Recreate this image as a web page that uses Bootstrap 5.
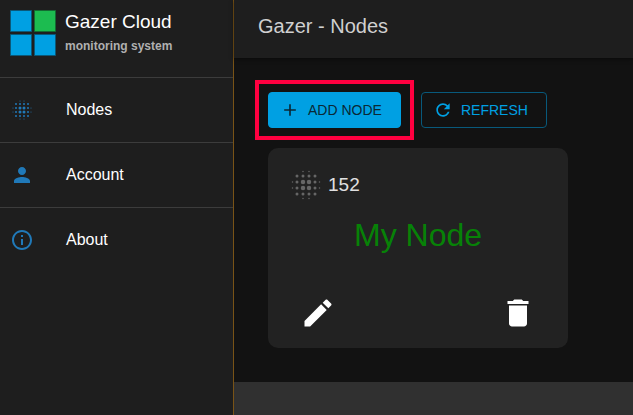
<!DOCTYPE html>
<html lang="en" data-bs-theme="dark">
<head>
<meta charset="utf-8">
<meta name="viewport" content="width=device-width, initial-scale=1">
<title>Gazer - Nodes</title>
<link href="https://cdn.jsdelivr.net/npm/bootstrap@5.3.0/dist/css/bootstrap.min.css" rel="stylesheet">
<style>
body { background: #303030; color: #fff; font-family: "Liberation Sans", Arial, sans-serif; }
svg { display: block; flex: none; }
.sidebar { width: 234px; flex: none; background: #1e1e1e; border-right: 1px solid #795316; }
.brand { height: 77px; padding: 10px; gap: 9px; color: #f0f0f0; }
.brand:hover { color: #fff; }
.brand-name { font-size: 19px; line-height: 24px; }
.brand-sub { font-size: 12px; line-height: 24px; color: #b0b0b0; }
.side-link { height: 65px; padding: 0 10px; gap: 32px; border-top: 1px solid #3c3c3c; border-radius: 0; color: #fff; font-size: 16px; }
.side-link:hover { color: #fff; background: #262626; }
.side-link svg { color: #2079b8; }
.topbar { height: 58px; padding: 0 24px; background: #1e1e1e; box-shadow: 0 1px 4px rgba(0, 0, 0, .5); }
.topbar h1 { font-size: 20px; line-height: 24px; margin: 0 0 6px; font-weight: 400; color: #d0d0d0; }
.page { background: #121212; padding: 34px; }
.tool { --bs-btn-padding-x: 11px; --bs-btn-padding-y: 0; --bs-btn-font-size: 14px; --bs-btn-border-radius: 4px; height: 36px; }
.tool-add { --bs-btn-bg: #00a0e3; --bs-btn-color: #0a2836; --bs-btn-hover-bg: #0090cc; --bs-btn-hover-color: #0a2836; --bs-btn-border-color: #00a0e3; min-width: 133px; }
.tool-refresh { --bs-btn-color: #00a0e3; --bs-btn-border-color: #08597b; --bs-btn-hover-color: #00a0e3; --bs-btn-hover-border-color: #00a0e3; min-width: 126px; }
.toolbar { gap: 20px; margin-bottom: 20px; }
.highlight::after { content: ""; position: absolute; inset: -12px -13px; border: 4px solid #ff0040; pointer-events: none; }
.node-card { max-width: 300px; min-height: 200px; background: #222; border: 0; border-radius: 10px; padding: 19px 20px 5px; color: #e0e0e0; }
.node-id { font-size: 19px; line-height: 24px; }
.node-id svg { color: #666; }
.node-name { font-size: 32px; line-height: 40px; color: #078207; margin: 12px 0 0; font-weight: 400; }
.icon-btn { --bs-btn-padding-x: 12px; --bs-btn-padding-y: 12px; --bs-btn-border-width: 0; --bs-btn-color: #fff; --bs-btn-hover-color: #fff; }
</style>
<script defer src="https://cdn.jsdelivr.net/npm/bootstrap@5.3.0/dist/js/bootstrap.bundle.min.js"></script>
</head>
<body>
<svg width="0" height="0" class="position-absolute" aria-hidden="true">
  <symbol id="dots" viewBox="0 0 24 24">
    <g fill="currentColor">
      <circle cx="6" cy="6" r="1"/><circle cx="10" cy="6" r="1"/><circle cx="14" cy="6" r="1"/><circle cx="18" cy="6" r="1"/>
      <circle cx="6" cy="10" r="1"/><circle cx="10" cy="10" r="1.5"/><circle cx="14" cy="10" r="1.5"/><circle cx="18" cy="10" r="1"/>
      <circle cx="6" cy="14" r="1"/><circle cx="10" cy="14" r="1.5"/><circle cx="14" cy="14" r="1.5"/><circle cx="18" cy="14" r="1"/>
      <circle cx="6" cy="18" r="1"/><circle cx="10" cy="18" r="1"/><circle cx="14" cy="18" r="1"/><circle cx="18" cy="18" r="1"/>
      <circle cx="3" cy="10" r=".5"/><circle cx="3" cy="14" r=".5"/><circle cx="21" cy="10" r=".5"/><circle cx="21" cy="14" r=".5"/>
      <circle cx="10" cy="3" r=".5"/><circle cx="14" cy="3" r=".5"/><circle cx="10" cy="21" r=".5"/><circle cx="14" cy="21" r=".5"/>
    </g>
  </symbol>
</svg>
<div class="d-flex min-vh-100">
  <aside class="sidebar d-flex flex-column">
    <a class="brand d-flex text-decoration-none" href="#">
      <svg width="46" height="46" viewBox="0 0 46 46" aria-hidden="true">
        <g stroke="#0b5878"><path fill="#00a0e3" d="M.5.5h21v21H.5zM.5 24.5h21v21H.5zM24.5 24.5h21v21h-21z"/><path fill="#1cbc50" stroke="#136b32" d="M24.5.5h21v21h-21z"/></g>
      </svg>
      <span class="d-flex flex-column">
        <span class="brand-name">Gazer Cloud</span>
        <span class="brand-sub fw-bold">monitoring system</span>
      </span>
    </a>
    <nav class="nav flex-column" aria-label="Main">
      <a class="nav-link side-link d-flex align-items-center" href="#nodes">
        <svg width="24" height="24" aria-hidden="true"><use href="#dots"/></svg>Nodes</a>
      <a class="nav-link side-link d-flex align-items-center" href="#account">
        <svg width="24" height="24" viewBox="0 0 24 24" fill="currentColor" aria-hidden="true"><path d="M12 12c2.21 0 4-1.79 4-4s-1.79-4-4-4-4 1.79-4 4 1.79 4 4 4zm0 2c-2.67 0-8 1.34-8 4v2h16v-2c0-2.66-5.33-4-8-4z"/></svg>Account</a>
      <a class="nav-link side-link d-flex align-items-center" href="#about">
        <svg width="24" height="24" viewBox="0 0 24 24" fill="currentColor" aria-hidden="true"><path d="M11 7h2v2h-2zm0 4h2v6h-2zm1-9C6.48 2 2 6.48 2 12s4.480 10 10 10 10-4.480 10-10S17.520 2 12 2zm0 18c-4.410 0-8-3.590-8-8s3.590-8 8-8 8 3.590 8 8-3.590 8-8 8z"/></svg>About</a>
    </nav>
  </aside>
  <div class="flex-grow-1">
    <header class="topbar d-flex align-items-center position-relative"><h1>Gazer - Nodes</h1></header>
    <main class="page">
      <div class="toolbar d-flex">
        <div class="highlight position-relative">
          <button type="button" class="btn tool tool-add d-flex align-items-center gap-2">
            <svg width="20" height="20" viewBox="0 0 24 24" fill="currentColor" aria-hidden="true"><path d="M19 13h-6v6h-2v-6H5v-2h6V5h2v6h6z"/></svg>ADD NODE</button>
        </div>
        <button type="button" class="btn tool tool-refresh d-flex align-items-center gap-2">
          <svg width="20" height="20" viewBox="0 0 24 24" fill="currentColor" aria-hidden="true"><path d="M17.650 6.350C16.200 4.900 14.210 4 12 4c-4.420 0-7.990 3.580-7.990 8s3.570 8 7.990 8c3.730 0 6.840-2.550 7.730-6h-2.080c-.82 2.330-3.040 4-5.650 4-3.310 0-6-2.690-6-6s2.690-6 6-6c1.660 0 3.140.69 4.220 1.780L13 11h7V4z"/></svg>REFRESH</button>
      </div>
      <section class="card node-card">
        <div class="node-id d-flex align-items-center gap-1">
          <svg width="36" height="36" aria-hidden="true"><use href="#dots"/></svg>152</div>
        <h2 class="node-name text-center">My Node</h2>
        <div class="d-flex justify-content-between mt-auto">
          <button type="button" class="btn icon-btn" aria-label="Edit">
            <svg width="36" height="36" viewBox="0 0 24 24" fill="currentColor" aria-hidden="true"><path d="M3 17.250V21h3.750L17.810 9.940l-3.750-3.750zM20.710 7.040c.39-.39.39-1.020 0-1.410l-2.340-2.340c-.39-.39-1.020-.39-1.410 0l-1.830 1.830 3.750 3.750z"/></svg></button>
          <button type="button" class="btn icon-btn" aria-label="Delete">
            <svg width="36" height="36" viewBox="0 0 24 24" fill="currentColor" aria-hidden="true"><path d="M6 19c0 1.100.9 2 2 2h8c1.100 0 2-.9 2-2V7H6zM19 4h-3.500l-1-1h-5l-1 1H5v2h14z"/></svg></button>
        </div>
      </section>
    </main>
  </div>
</div>
</body>
</html>
